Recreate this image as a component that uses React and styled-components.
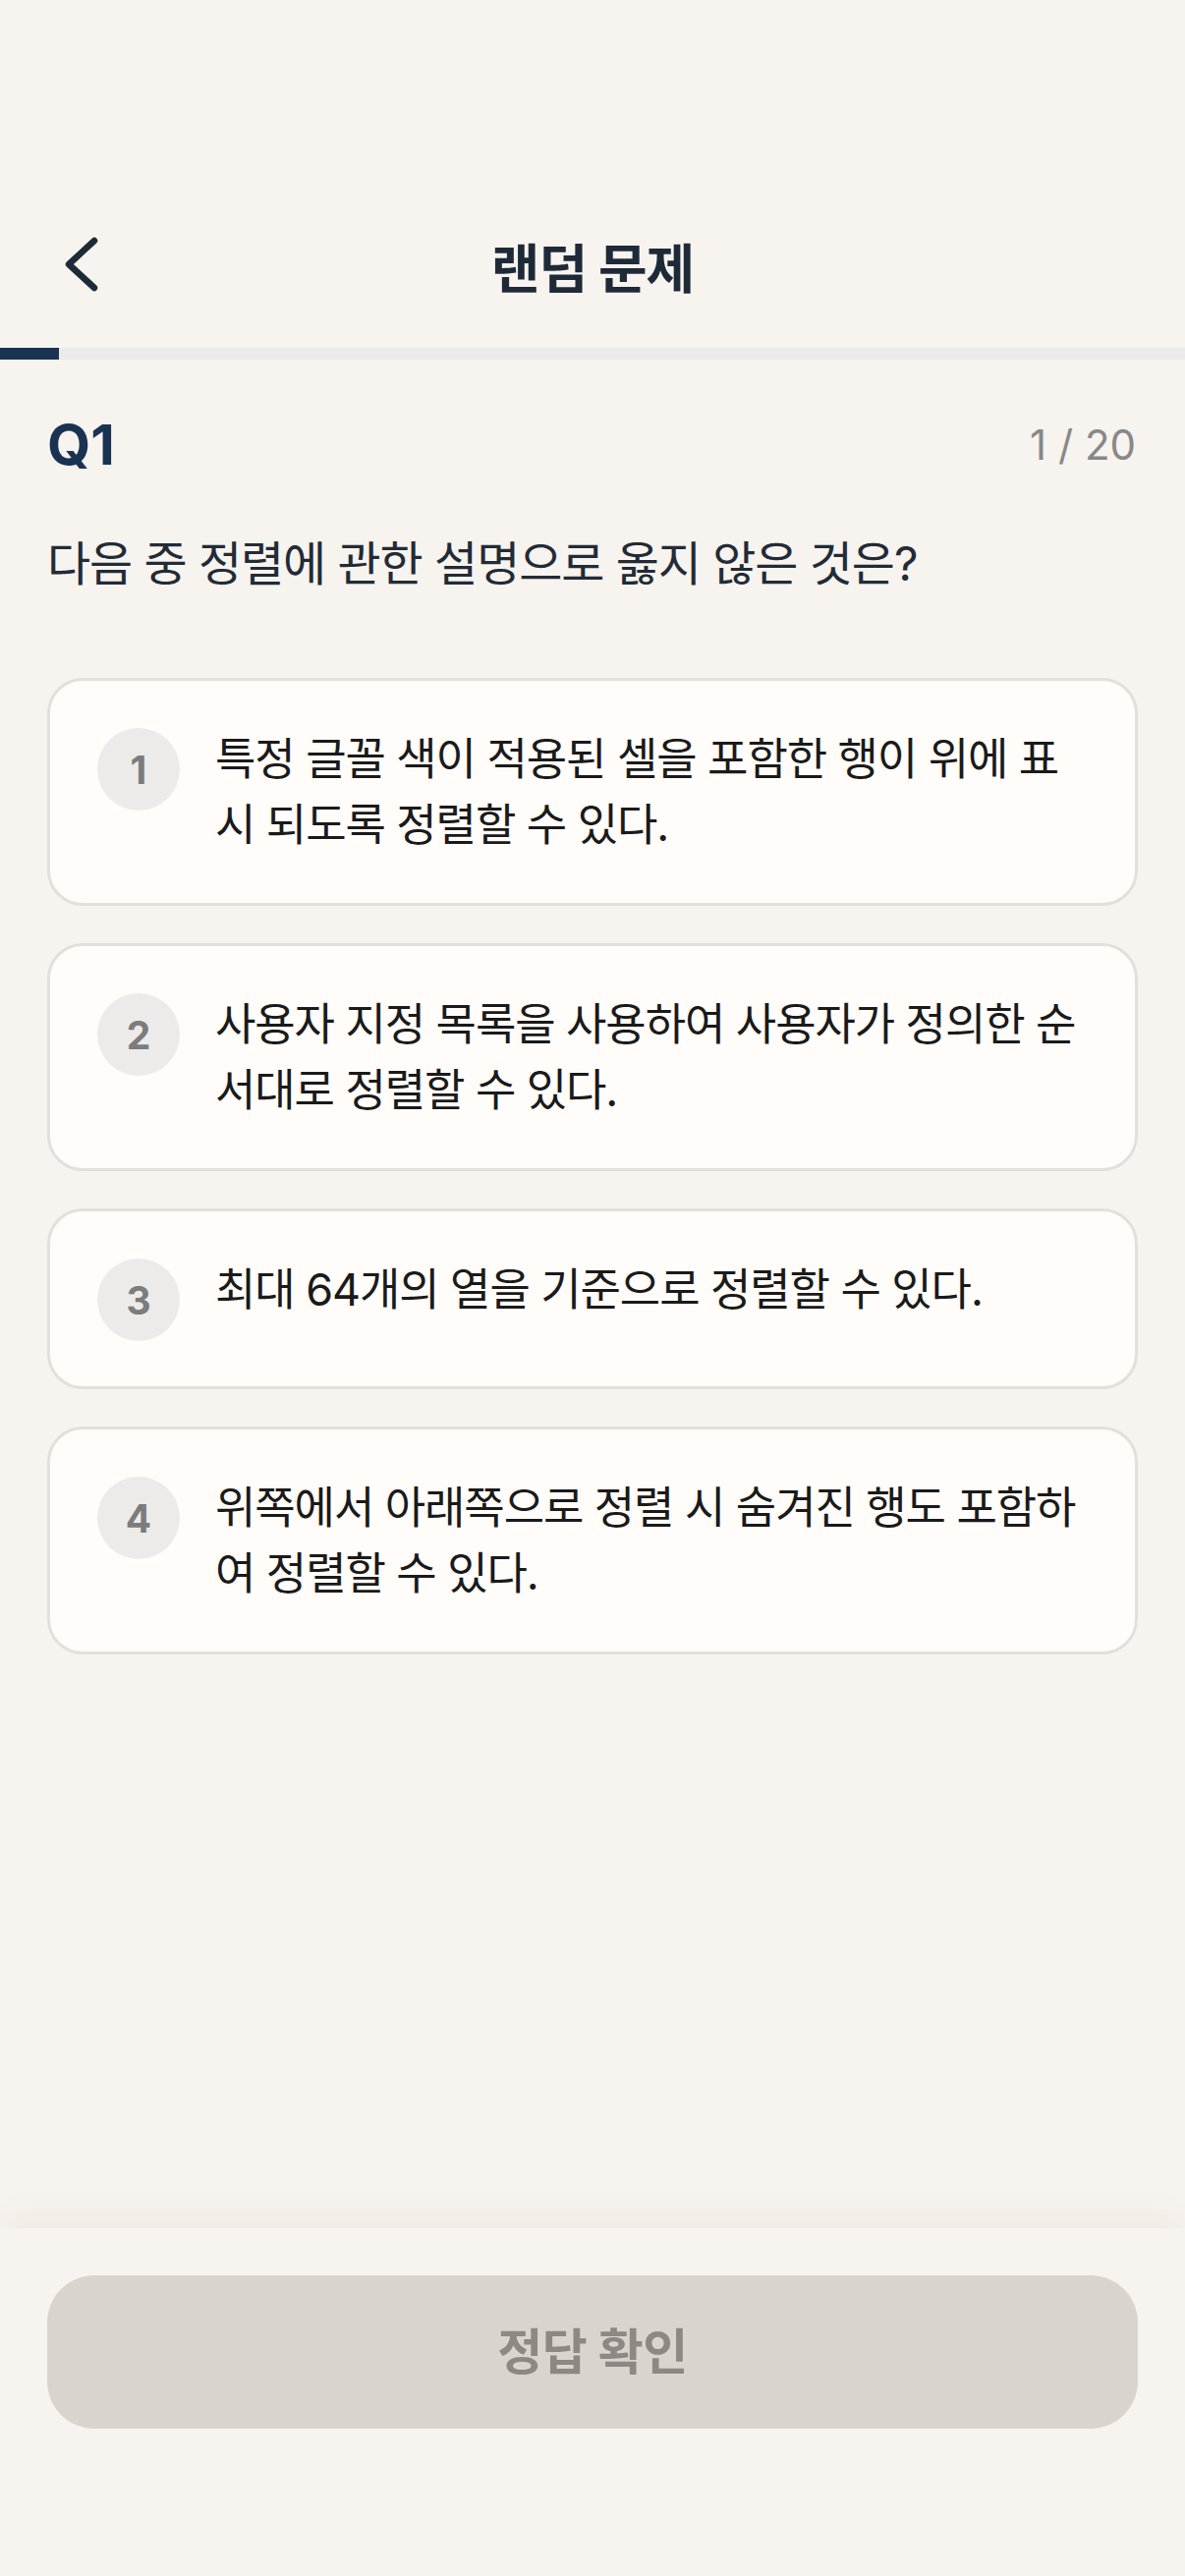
import React from "react";
import styled, { createGlobalStyle } from "styled-components";

const GlobalStyle = createGlobalStyle`
  html, body {
    margin: 0;
    padding: 0;
    background: #f7f3ee;
  }
  body {
    font-family: Inter, "Noto Sans CJK KR", "Noto Sans", sans-serif;
    -webkit-font-smoothing: antialiased;
  }
`;

const Page = styled.div`
  min-height: 100vh;
  display: flex;
  flex-direction: column;
  background: #f7f3ee;
`;

const StatusSpace = styled.div`
  height: 186px;
`;

const Header = styled.header`
  height: 168px;
  display: grid;
  grid-template-columns: 168px 1fr 168px;
  align-items: center;
`;

const BackButton = styled.button`
  border: 0;
  background: none;
  padding: 0 0 0 62px;
  height: 100%;
  display: flex;
  align-items: center;
  cursor: pointer;
`;

const Title = styled.h1`
  margin: 0;
  text-align: center;
  font-size: 54px;
  font-weight: 700;
  color: #1e2a38;
  letter-spacing: -1px;
`;

const Track = styled.div`
  height: 12px;
  background: #ebebeb;
`;

const Fill = styled.div`
  height: 100%;
  background: #1b3352;
`;

const Content = styled.main`
  flex: 1;
  padding: 0 48px;
`;

const QHead = styled.div`
  display: flex;
  justify-content: space-between;
  align-items: center;
  margin-top: 52px;
  height: 68px;
`;

const QNum = styled.span`
  font-size: 57px;
  font-weight: 700;
  color: #1b3352;
`;

const Counter = styled.span`
  font-size: 42px;
  color: #888888;
  padding-right: 2px;
`;

const Question = styled.p`
  margin: 52px 0 0;
  font-size: 48px;
  line-height: 72px;
  color: #222b36;
  letter-spacing: -1.1px;
`;

const OptionList = styled.div`
  margin-top: 80px;
  display: flex;
  flex-direction: column;
  gap: 38px;
`;

const Option = styled.div`
  display: flex;
  align-items: flex-start;
  gap: 36px;
  padding: 46px 48px 46px;
  background: #fffcf9;
  border: 3px solid #e3e0dc;
  border-radius: 36px;
`;

const Badge = styled.span`
  flex: none;
  width: 84px;
  height: 84px;
  border-radius: 50%;
  background: #ecebea;
  color: #7c7c7c;
  font-size: 39px;
  font-weight: 700;
  display: flex;
  align-items: center;
  justify-content: center;
  margin-top: 2px;
`;

const OptionText = styled.span`
  flex: 1;
  font-size: 45px;
  line-height: 67px;
  color: #1a1a1a;
  letter-spacing: -1.1px;
  word-break: break-all;
`;

const Footer = styled.footer`
  padding: 48px 48px 150px;
  background: #f7f3ee;
  box-shadow: 0 -14px 30px rgba(120, 100, 80, 0.05);
`;

const SubmitButton = styled.button`
  width: 100%;
  height: 156px;
  border: 0;
  border-radius: 48px;
  background: #d9d4ce;
  color: #8c8883;
  font-family: inherit;
  font-size: 50px;
  font-weight: 700;
  letter-spacing: -0.5px;
  padding-bottom: 10px;
`;

const options = [
  "특정 글꼴 색이 적용된 셀을 포함한 행이 위에 표시 되도록 정렬할 수 있다.",
  "사용자 지정 목록을 사용하여 사용자가 정의한 순서대로 정렬할 수 있다.",
  "최대 64개의 열을 기준으로 정렬할 수 있다.",
  "위쪽에서 아래쪽으로 정렬 시 숨겨진 행도 포함하여 정렬할 수 있다.",
];

const current = 1;
const total = 20;

export default function App() {
  return (
    <Page>
      <GlobalStyle />
      <StatusSpace />
      <Header>
        <BackButton aria-label="뒤로">
          <svg width="40" height="60" viewBox="0 0 40 60" fill="none">
            <polyline
              points="34,5 8,29 34,53"
              stroke="#1e2a38"
              strokeWidth="6.5"
              strokeLinecap="round"
              strokeLinejoin="round"
            />
          </svg>
        </BackButton>
        <Title>랜덤 문제</Title>
        <span />
      </Header>
      <Track>
        <Fill style={{ width: `${(current / total) * 100}%` }} />
      </Track>
      <Content>
        <QHead>
          <QNum>Q{current}</QNum>
          <Counter>
            {current} / {total}
          </Counter>
        </QHead>
        <Question>다음 중 정렬에 관한 설명으로 옳지 않은 것은?</Question>
        <OptionList>
          {options.map((text, i) => (
            <Option key={i}>
              <Badge>{i + 1}</Badge>
              <OptionText>{text}</OptionText>
            </Option>
          ))}
        </OptionList>
      </Content>
      <Footer>
        <SubmitButton disabled>정답 확인</SubmitButton>
      </Footer>
    </Page>
  );
}
